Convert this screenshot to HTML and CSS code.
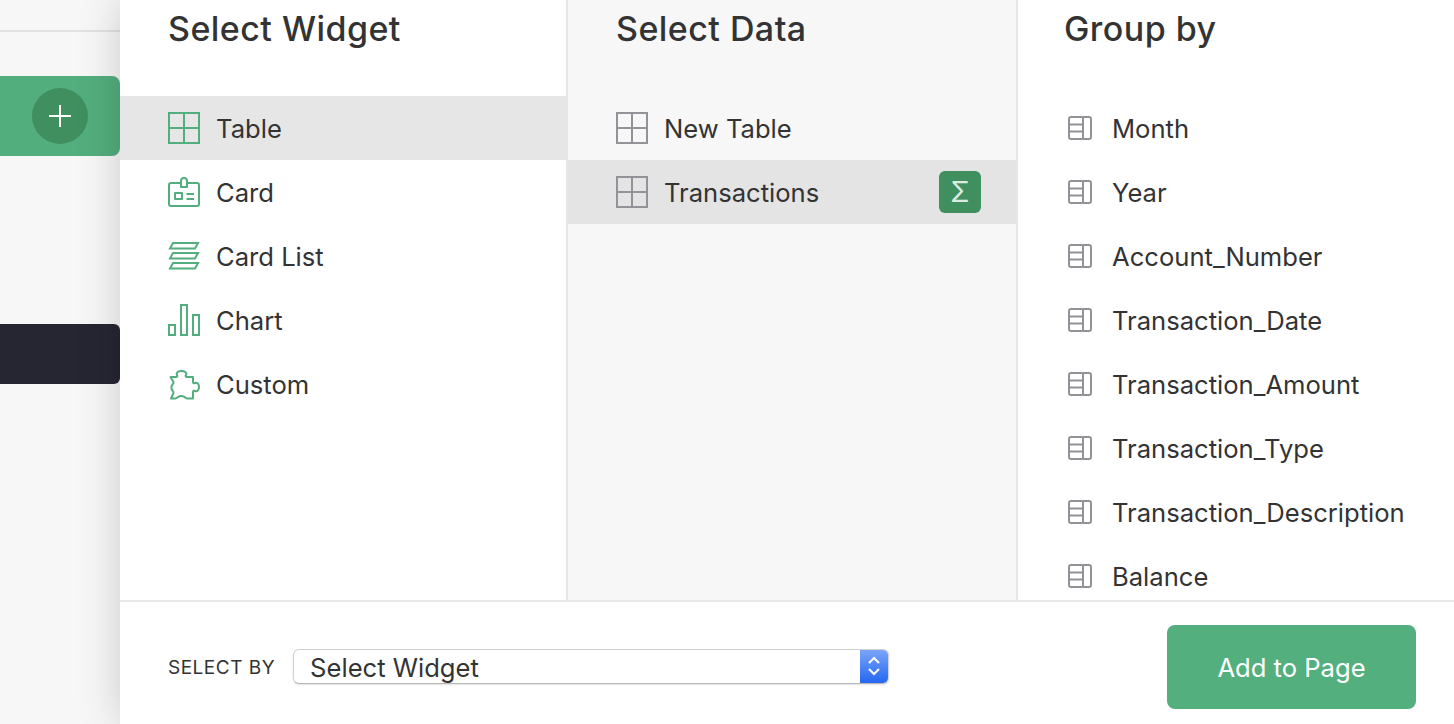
FILE: index.html
```html
<!DOCTYPE html>
<html lang="en">
<head>
<meta charset="utf-8">
<title>Add to Page</title>
<link rel="stylesheet" href="styles.css">
</head>
<body>
<svg class="defs" width="0" height="0" aria-hidden="true">
  <symbol id="grid" viewBox="0 0 32 32"><path d="M1 1h30v30H1zM16 1v30M1 16h30" fill="none" stroke="currentColor" stroke-width="2"/></symbol>
  <symbol id="card" viewBox="0 0 32 32"><g fill="none" stroke="currentColor" stroke-width="2" stroke-linejoin="round"><path d="M13 7H3a2 2 0 0 0-2 2v19a2 2 0 0 0 2 2h26a2 2 0 0 0 2-2V9a2 2 0 0 0-2-2H19"/><path d="M13 11V5a3 3 0 0 1 6 0v6z"/><path d="M7 17h7v6H7zM18.500 18h7.500M18.500 23h7.500"/></g></symbol>
  <symbol id="list" viewBox="0 0 32 32"><g fill="none" stroke="currentColor" stroke-width="2" stroke-linejoin="miter"><path d="M5 3h25l-3 5.500H2zM5 13h25l-3 5.500H2zM5 23h25l-3 5.500H2z"/></g></symbol>
  <symbol id="chart" viewBox="0 0 32 32"><g fill="none" stroke="currentColor" stroke-width="2"><path d="M1 21h6v10H1zM13 1h6v30h-6zM25 11h6v20h-6z"/></g></symbol>
  <symbol id="puzzle" viewBox="0 0 32 32"><path d="M2.500 9H8.500C9.500 9 9.500 8 9 7C7.800 4.500 10.500 3 13.500 3S19.200 4.500 18 7C17.500 8 17.500 9 18.500 9H25V14C25 15.500 26 15.500 27 15C29.500 14 31 16.500 31 19S29.500 24 27 23C26 22.500 25 22.500 25 24V30.500H19C17.500 30.500 17.500 29.500 16.500 29C14.500 27.800 12 27.800 10 29C9 29.500 9 30.500 7.500 30.500H3L5.500 25C6 24 5.500 23.500 4.500 22.500C3 21 3 18 4.500 16.500C5.500 15.500 6 15 5.500 14Z" fill="none" stroke="currentColor" stroke-width="2" stroke-linejoin="round"/></symbol>
  <symbol id="column" viewBox="0 0 24 24"><g fill="none" stroke="currentColor" stroke-width="2"><rect x="1" y="1" width="22" height="22" rx="2"/><path d="M15 1v22M1 8.500h14M1 15.500h14"/></g></symbol>
</svg>
<div class="app">
  <aside class="sidebar">
    <div class="sidebar-top"></div>
    <div class="add-bar"><span class="add-circle"><svg class="plus" viewBox="0 0 24 24" aria-hidden="true"><path d="M12 1v22M1 12h22" stroke="currentColor" stroke-width="2"/></svg></span></div>
    <div class="dark-bar"></div>
  </aside>
  <main class="modal">
    <div class="columns">
      <section class="col col-widget">
        <h2 class="col-title">Select Widget</h2>
        <ul class="items">
          <li class="item selected-light"><svg class="icon green"><use href="#grid"/></svg><span class="label">Table</span></li>
          <li class="item"><svg class="icon green"><use href="#card"/></svg><span class="label">Card</span></li>
          <li class="item"><svg class="icon green"><use href="#list"/></svg><span class="label">Card List</span></li>
          <li class="item"><svg class="icon green"><use href="#chart"/></svg><span class="label">Chart</span></li>
          <li class="item"><svg class="icon green"><use href="#puzzle"/></svg><span class="label">Custom</span></li>
        </ul>
      </section>
      <section class="col col-data">
        <h2 class="col-title">Select Data</h2>
        <ul class="items">
          <li class="item"><svg class="icon grey"><use href="#grid"/></svg><span class="label">New Table</span></li>
          <li class="item selected-grey"><svg class="icon grey"><use href="#grid"/></svg><span class="label">Transactions</span><span class="sigma">Σ</span></li>
        </ul>
      </section>
      <section class="col col-group">
        <h2 class="col-title">Group by</h2>
        <ul class="items">
          <li class="item"><svg class="icon-small grey"><use href="#column"/></svg><span class="label">Month</span></li>
          <li class="item"><svg class="icon-small grey"><use href="#column"/></svg><span class="label">Year</span></li>
          <li class="item"><svg class="icon-small grey"><use href="#column"/></svg><span class="label">Account_Number</span></li>
          <li class="item"><svg class="icon-small grey"><use href="#column"/></svg><span class="label">Transaction_Date</span></li>
          <li class="item"><svg class="icon-small grey"><use href="#column"/></svg><span class="label">Transaction_Amount</span></li>
          <li class="item"><svg class="icon-small grey"><use href="#column"/></svg><span class="label">Transaction_Type</span></li>
          <li class="item"><svg class="icon-small grey"><use href="#column"/></svg><span class="label">Transaction_Description</span></li>
          <li class="item"><svg class="icon-small grey"><use href="#column"/></svg><span class="label">Balance</span></li>
        </ul>
      </section>
    </div>
    <footer class="footer">
      <span class="select-label">SELECT BY</span>
      <div class="select">
        <span class="select-text">Select Widget</span>
        <span class="select-cap"><svg class="chevrons" viewBox="0 0 14 24" aria-hidden="true"><path d="M2 9l5-5 5 5M2 15l5 5 5-5" fill="none" stroke="currentColor" stroke-width="2"/></svg></span>
      </div>
      <button class="add-button">Add to Page</button>
    </footer>
  </main>
</div>
</body>
</html>
```
FILE: styles.css
```css
* { box-sizing: border-box; }
html, body { margin: 0; height: 100%; overflow: hidden; }
body { font-family: Inter, "Liberation Sans", sans-serif; color: #333; background: #f7f7f7; }
.defs { position: absolute; }
.app { display: flex; width: 1454px; height: 724px; }
.sidebar { width: 120px; flex: none; background: #f7f7f7; }
.sidebar-top { height: 32px; border-bottom: 2px solid #e2e2e2; }
.add-bar { height: 80px; margin-top: 44px; background: #53ae7d; border-radius: 0 8px 8px 0; display: flex; align-items: center; justify-content: center; }
.add-circle { width: 56px; height: 56px; border-radius: 50%; background: #3f8f5f; color: #fff; display: flex; align-items: center; justify-content: center; }
.plus { width: 24px; height: 24px; }
.dark-bar { height: 60px; margin-top: 168px; background: #262633; border-radius: 0 6px 6px 0; }
.modal { flex: 1; min-width: 0; background: #fff; display: flex; flex-direction: column; position: relative; box-shadow: 0 0 40px rgba(0, 0, 0, .18); }
.columns { flex: 1; min-height: 0; display: flex; overflow: hidden; }
.col { min-width: 0; }
.col-widget { width: 448px; border-right: 2px solid #e6e6e6; }
.col-data { width: 450px; background: #f7f7f7; border-right: 2px solid #e6e6e6; }
.col-group { flex: 1; }
.col-title { margin: 0; height: 96px; padding: 8px 0 0 48px; font-size: 34px; line-height: 42px; font-weight: 450; letter-spacing: .45px; color: #333; }
.col-group .col-title { padding-left: 46px; }
.items { list-style: none; margin: 0; padding: 0; }
.item { height: 64px; display: flex; align-items: center; padding-left: 48px; font-size: 25.6px; white-space: nowrap; }
.label { margin-top: 1px; }
.col-group .item { padding-left: 50px; }
.selected-light { background: #e6e6e6; }
.selected-grey { background: #e4e4e4; }
.icon { width: 32px; height: 32px; margin-right: 16px; flex: none; }
.icon-small { width: 24px; height: 24px; margin-right: 20px; flex: none; }
.green { color: #53ae7d; }
.grey { color: #929299; }
.sigma { margin-left: auto; margin-right: 35px; width: 42px; height: 42px; border-radius: 6px; background: #3f8f5f; color: #dcebe2; font-size: 28px; display: flex; align-items: center; justify-content: center; }
.footer { height: 124px; flex: none; border-top: 2px solid #e8e8e8; display: flex; align-items: center; padding: 8px 38px 0 48px; background: #fff; }
.select-label { font-size: 19px; letter-spacing: .5px; margin-right: 18px; color: #333; }
.select { width: 596px; height: 35px; margin-bottom: 2px; display: flex; align-items: stretch; border: 1px solid #d0d0d0; border-bottom-color: #b8b8b8; border-radius: 6px; overflow: hidden; box-shadow: 0 1px 2px rgba(0, 0, 0, .12); }
.select-text { flex: 1; padding-left: 16px; font-size: 25.6px; line-height: 36px; }
.select-cap { width: 28px; background: linear-gradient(#7aa5f8, #2567f2); display: flex; align-items: center; justify-content: center; color: #fff; }
.chevrons { width: 14px; height: 24px; }
.add-button { margin-left: auto; width: 249px; height: 84px; border: 0; border-radius: 8px; background: #54af7e; color: #fff; font-family: inherit; font-size: 25.6px; }
```
